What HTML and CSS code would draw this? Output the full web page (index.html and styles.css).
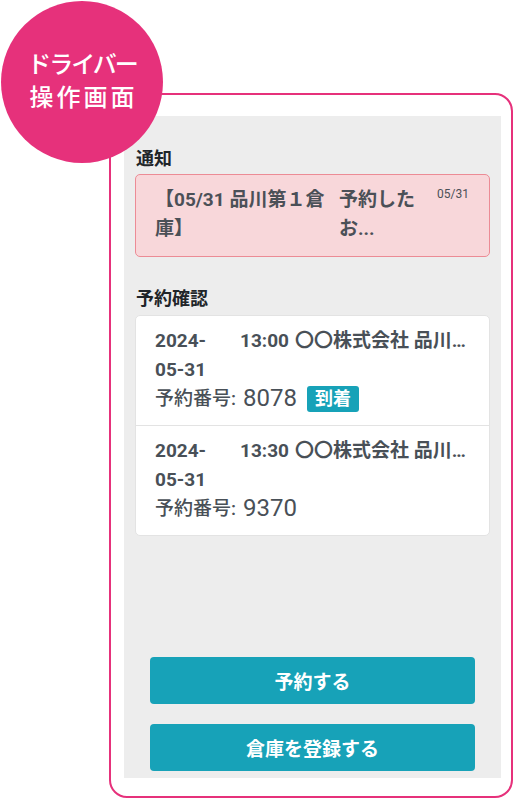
FILE: index.html
```html
<!DOCTYPE html>
<html lang="ja">
<head>
    <meta charset="UTF-8">
    <meta name="viewport" content="width=device-width, initial-scale=1.0">
    <title>ドライバー操作画面</title>
    <link rel="stylesheet" href="styles.css">
</head>
<body>

    <div class="stage">
        <div class="tag">
            <span class="tag-line tag-line1">ドライバー</span>
            <span class="tag-line tag-line2">操作画面</span>
        </div>

        <div class="frame">
            <div class="screen">
                <h2 class="section-title">通知</h2>
                <div class="alert">
                    <div class="alert-title">【05/31 品川第１倉庫】</div>
                    <div class="alert-body">予約したお...</div>
                    <div class="alert-date">05/31</div>
                </div>

                <h2 class="section-title">予約確認</h2>
                <ul class="resv-list">
                    <li class="resv">
                        <div class="resv-top">
                            <span class="resv-date">2024-<br>05-31</span>
                            <span class="resv-time">13:00</span>
                            <span class="resv-name">〇〇株式会社 品川第１倉庫</span>
                        </div>
                        <div class="resv-no">
                            予約番号: <span class="resv-num">8078</span>
                            <span class="badge">到着</span>
                        </div>
                    </li>
                    <li class="resv">
                        <div class="resv-top">
                            <span class="resv-date">2024-<br>05-31</span>
                            <span class="resv-time">13:30</span>
                            <span class="resv-name">〇〇株式会社 品川第１倉庫</span>
                        </div>
                        <div class="resv-no">
                            予約番号: <span class="resv-num">9370</span>
                        </div>
                    </li>
                </ul>

                <div class="actions">
                    <button class="btn">予約する</button>
                    <button class="btn">倉庫を登録する</button>
                </div>
            </div>
        </div>
    </div>

</body>
</html>
```

FILE: styles.css
```css
body {
    margin: 0;
    background-color: #fff;
    font-family: Roboto, "Noto Sans CJK JP", sans-serif;
    color: #495057;
}
.stage {
    position: relative;
    width: 515px;
    height: 799px;
    padding-top: 93px;
    padding-left: 109px;
    box-sizing: border-box;
}
.tag {
    position: absolute;
    left: 1px;
    top: 1px;
    width: 162px;
    height: 162px;
    border-radius: 50%;
    background-color: #e6317b;
    color: #fff;
    display: flex;
    flex-direction: column;
    align-items: center;
    justify-content: center;
    font-family: "Noto Sans CJK JP", sans-serif;
    font-weight: 500;
    font-size: 24px;
    line-height: 33px;
    z-index: 2;
    padding-bottom: 6px;
    box-sizing: border-box;
}
.tag-line1 {
    letter-spacing: -2px;
}
.tag-line2 {
    letter-spacing: 3px;
    margin-left: 3px;
}
.frame {
    width: 404px;
    height: 705px;
    border: 2px solid #e6317b;
    border-radius: 18px;
    padding: 21px 10px 18px 13px;
    box-sizing: border-box;
    display: flex;
}
.screen {
    flex: 1;
    min-width: 0;
    background-color: #ededed;
    padding: 29px 11px 7px 11px;
    display: flex;
    flex-direction: column;
}
.section-title {
    margin: 0 0 1px 1px;
    font-size: 18px;
    line-height: 28px;
    font-weight: bold;
    color: #212529;
}
.alert {
    display: grid;
    grid-template-columns: 184px 98px 1fr;
    background-color: #f8d7da;
    border: 1px solid #ec8b95;
    border-radius: 5px;
    padding: 10px 19px 13px 19px;
    margin-bottom: 28px;
    font-size: 19px;
    line-height: 29px;
    font-weight: bold;
    color: #4b5057;
}
.alert-title {
    padding-right: 8px;
}
.alert-body {
    padding-right: 12px;
}
.alert-date {
    font-size: 12px;
    line-height: 19px;
    font-weight: normal;
}
.resv-list {
    list-style-type: none;
    margin: 1px 0 0 0;
    padding: 0;
    background-color: #fff;
    border: 1px solid #e3e3e3;
    border-radius: 5px;
}
.resv {
    padding: 10px 19px 12px 19px;
    font-size: 19px;
    line-height: 29px;
}
.resv + .resv {
    border-top: 1px solid #e3e3e3;
}
.resv-top {
    display: flex;
    align-items: flex-start;
    font-weight: bold;
}
.resv-date {
    width: 85px;
    flex-shrink: 0;
}
.resv-time {
    flex-shrink: 0;
    margin-right: 6px;
}
.resv-name {
    flex: 1;
    min-width: 0;
    white-space: nowrap;
    overflow: hidden;
    text-overflow: ellipsis;
}
.resv-no {
    display: flex;
    align-items: center;
    gap: 7px;
    font-weight: 500;
}
.resv-num {
    font-size: 24px;
    font-weight: normal;
}
.badge {
    background-color: #17a2b8;
    color: #fff;
    font-size: 18px;
    line-height: 26px;
    font-weight: bold;
    padding: 0 8px;
    border-radius: 3px;
    margin-left: 3px;
}
.actions {
    margin-top: auto;
    padding: 0 15px;
    display: flex;
    flex-direction: column;
    gap: 20px;
}
.btn {
    height: 47px;
    background-color: #17a2b8;
    color: #fff;
    border: none;
    border-radius: 4px;
    font-family: Roboto, "Noto Sans CJK JP", sans-serif;
    font-size: 19px;
    font-weight: bold;
    cursor: pointer;
}
```
